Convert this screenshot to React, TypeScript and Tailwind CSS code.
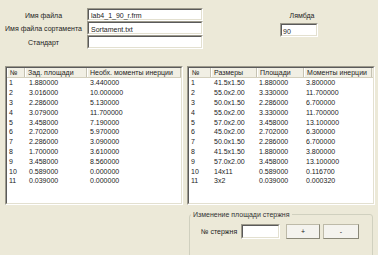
import React from 'react';

// --- DATA ---
const givenRows = [
  ['1', '1.880000', '3.440000'],
  ['2', '3.016000', '10.000000'],
  ['3', '2.286000', '5.130000'],
  ['4', '3.079000', '11.700000'],
  ['5', '3.458000', '7.190000'],
  ['6', '2.702000', '5.970000'],
  ['7', '2.286000', '3.090000'],
  ['8', '1.700000', '3.610000'],
  ['9', '3.458000', '8.560000'],
  ['10', '0.589000', '0.000000'],
  ['11', '0.039000', '0.000000'],
];

const sortRows = [
  ['1', '41.5x1.50', '1.880000', '3.800000'],
  ['2', '55.0x2.00', '3.330000', '11.700000'],
  ['3', '50.0x1.50', '2.286000', '6.700000'],
  ['4', '55.0x2.00', '3.330000', '11.700000'],
  ['5', '57.0x2.00', '3.458000', '13.100000'],
  ['6', '45.0x2.00', '2.702000', '6.300000'],
  ['7', '50.0x1.50', '2.286000', '6.700000'],
  ['8', '41.5x1.50', '1.880000', '3.800000'],
  ['9', '57.0x2.00', '3.458000', '13.100000'],
  ['10', '14x11', '0.589000', '0.116700'],
  ['11', '3x2', '0.039000', '0.000320'],
];

// --- sunken 3D box (classic edit / listview frame) ---
const Sunken = ({ className = '', children }: { className?: string; children?: React.ReactNode }) => (
  <div className={`border border-t-[#9d9a8c] border-l-[#9d9a8c] border-b-white border-r-white ${className}`}>
    <div className="h-full w-full border border-t-[#5a5a5a] border-l-[#5a5a5a] border-b-[#e3e0d0] border-r-[#e3e0d0] bg-white">
      {children}
    </div>
  </div>
);

const HeaderCell = ({ children }: { children: React.ReactNode }) => (
  <div className="h-full pl-[2px] flex items-center border-r border-r-[#c5c2b2] border-l border-l-white whitespace-nowrap overflow-hidden">
    {children}
  </div>
);

function App() {
  return (
    <div
      className="relative w-[378px] h-[255px] overflow-hidden bg-[#ece9d8] text-[7px] leading-none text-[#1c1c1c]"
      style={{ fontFamily: '"Liberation Sans", Arial, sans-serif' }}
    >
      {/* --- TOP FIELDS --- */}
      <div className="flex pt-[8px]">
        <div className="w-[87px] flex flex-col text-center">
          <div className="h-[13px] flex items-center justify-center pt-[2px]">Имя файла</div>
          <div className="h-[14px] flex items-center justify-center">Имя файла сортамента</div>
          <div className="h-[14px] flex items-center justify-center">Стандарт</div>
        </div>
        <div className="w-[116px] flex flex-col">
          <Sunken className="h-[13px]">
            <div className="pl-[2px] pt-[2px]">lab4_1_90_r.frm</div>
          </Sunken>
          <Sunken className="h-[14px]">
            <div className="pl-[2px] pt-[3px]">Sortament.txt</div>
          </Sunken>
          <Sunken className="h-[14px]" />
        </div>
        <div className="ml-[77px] w-[38px] flex flex-col items-center">
          <div className="h-[15px] pt-[4px] pl-[6px]">Лямбда</div>
          <Sunken className="w-[38px] h-[14px]">
            <div className="pl-[1px] pt-[3px]">90</div>
          </Sunken>
        </div>
      </div>

      {/* --- TABLES --- */}
      <div className="flex gap-[4px] pl-[5px] mt-[17px]">
        <Sunken className="w-[178px] h-[139px]">
          <div className="grid grid-cols-[18px_62px_94px] h-[10px] bg-[#f1efe4] border-b border-b-[#d3cfbd]">
            <HeaderCell>№</HeaderCell>
            <HeaderCell>Зад. площади</HeaderCell>
            <HeaderCell>Необх. моменты инерции</HeaderCell>
          </div>
          {givenRows.map((r) => (
            <div key={r[0]} className="grid grid-cols-[18px_62px_94px] h-[9.8px] items-center">
              <div className="pl-[2px]">{r[0]}</div>
              <div className="pl-[4px]">{r[1]}</div>
              <div className="pl-[3px]">{r[2]}</div>
            </div>
          ))}
        </Sunken>

        <Sunken className="w-[188px] h-[139px]">
          <div className="grid grid-cols-[22px_46px_47px_68px] h-[10px] bg-[#f1efe4] border-b border-b-[#d3cfbd]">
            <HeaderCell>№</HeaderCell>
            <HeaderCell>Размеры</HeaderCell>
            <HeaderCell>Площади</HeaderCell>
            <HeaderCell>Моменты инерции</HeaderCell>
          </div>
          {sortRows.map((r) => (
            <div key={r[0]} className="grid grid-cols-[22px_46px_47px_68px] h-[9.8px] items-center">
              <div className="pl-[2px]">{r[0]}</div>
              <div className="pl-[3px]">{r[1]}</div>
              <div className="pl-[2px]">{r[2]}</div>
              <div className="pl-[2px]">{r[3]}</div>
            </div>
          ))}
        </Sunken>
      </div>

      {/* --- GROUP BOX --- */}
      <div className="flex justify-end pr-[5px] mt-[6px]">
        <fieldset className="w-[184px] h-[70px] border border-[#d0d0bf] rounded-[3px] px-[8px]">
          <legend className="px-[2px] -ml-[7px] text-[#333]">Изменение площади стержня</legend>
          <div className="flex items-center mt-[6px]">
            <span className="w-[43px] pl-[3px]">№ стержня</span>
            <Sunken className="w-[39px] h-[15px]" />
            <button className="ml-[6px] w-[34px] h-[15px] bg-[#f4f3ee] border border-[#bdbaa8] border-r-[#8a8878] border-b-[#8a8878]">+</button>
            <button className="ml-[3px] w-[36px] h-[15px] bg-[#f4f3ee] border border-[#bdbaa8] border-r-[#8a8878] border-b-[#8a8878]">-</button>
          </div>
        </fieldset>
      </div>
    </div>
  );
}

export default App;
